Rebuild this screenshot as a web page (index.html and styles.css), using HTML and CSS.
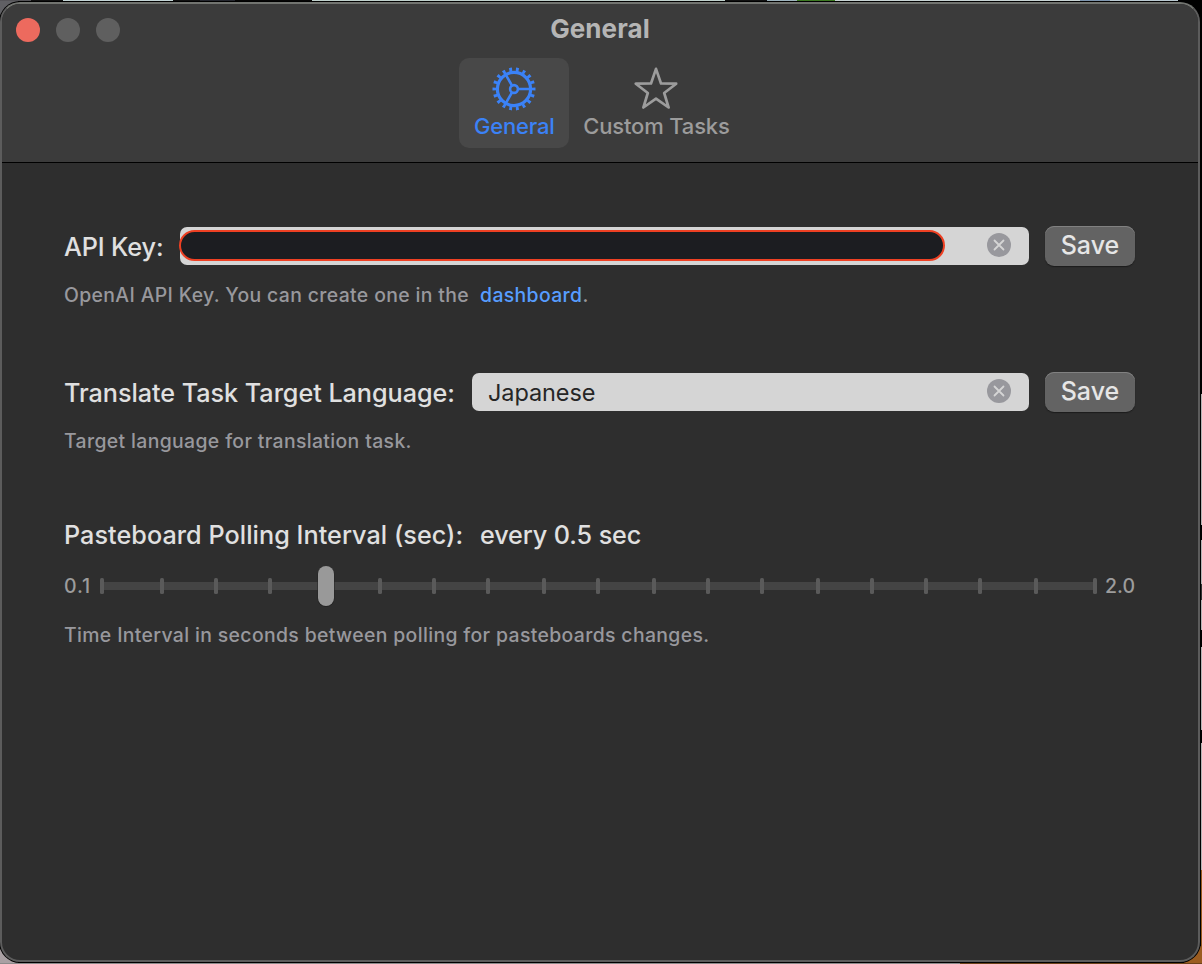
FILE: index.html
```
<!DOCTYPE html>
<html lang="en">
<head>
<meta charset="utf-8">
<title>General</title>
<link rel="stylesheet" href="styles.css">
</head>
<body>
<div class="desktop">
<main class="window">
  <header class="toolbar">
    <div class="titlebar">
      <div class="lights"><i class="light close"></i><i class="light"></i><i class="light"></i></div>
      <h1 class="title">General</h1>
      <div></div>
    </div>
    <nav class="tabs">
      <a class="tab active">
        <svg class="tab-icon" width="44" height="44" viewBox="-22 -22 44 44" fill="none" stroke="#3b82f7">
          <circle r="16.6" stroke-width="3.2"/>
          <circle r="19.5" stroke-width="4" pathLength="180" stroke-dasharray="4.2 5.8" stroke-dashoffset="2.1"/>
          <circle r="3.9" stroke-width="2.6"/>
          <path stroke-width="2.6" d="M4.5 0H16M-2.25-3.9L-8-13.9M-2.25 3.9L-8 13.9"/>
        </svg>
        <span class="tab-label">General</span>
      </a>
      <a class="tab">
        <svg class="tab-icon" width="44" height="44" viewBox="0 0 44 44" fill="none" stroke="#9c9c9c" stroke-width="2.7" stroke-linejoin="round">
          <path d="M22 1.9L27 16.5L42.2 16.7L30.2 26L34.6 40.5L22 31.7L9.4 40.5L13.8 26L1.8 16.7L17 16.5Z"/>
        </svg>
        <span class="tab-label">Custom Tasks</span>
      </a>
    </nav>
  </header>
  <section class="content">
    <div class="setting">
      <div class="row">
        <label class="label l-api">API Key:</label>
        <div class="field secret"><span class="redaction"></span>
          <svg class="clear" width="24" height="24" viewBox="0 0 24 24"><circle cx="12" cy="12" r="12" fill="#98989d"/><path d="M7.5 7.5l9 9m0-9l-9 9" stroke="#d5d5d5" stroke-width="1.8" stroke-linecap="round"/></svg>
        </div>
        <button class="save">Save</button>
      </div>
      <p class="hint"><span>OpenAI API Key. You can create one in the</span><span><a class="link">dashboard</a>.</span></p>
    </div>
    <div class="setting">
      <div class="row">
        <label class="label l-lang">Translate Task Target Language:</label>
        <div class="field"><span class="value">Japanese</span>
          <svg class="clear" width="24" height="24" viewBox="0 0 24 24"><circle cx="12" cy="12" r="12" fill="#98989d"/><path d="M7.5 7.5l9 9m0-9l-9 9" stroke="#d5d5d5" stroke-width="1.8" stroke-linecap="round"/></svg>
        </div>
        <button class="save">Save</button>
      </div>
      <p class="hint"><span>Target language for translation task.</span></p>
    </div>
    <div class="setting">
      <div class="poll"><span class="label l-poll">Pasteboard Polling Interval (sec):</span><span class="label l-every">every 0.5 sec</span></div>
      <div class="slider">
        <span class="bound low">0.1</span>
        <svg class="track" width="997" height="44" viewBox="100 564 997 44">
          <rect x="102" y="582" width="993" height="8" fill="#444"/>
          <g fill="#5a5a5a">
            <rect x="100" y="578" width="4" height="16" rx="1.5"/><rect x="160" y="578" width="4" height="16" rx="1.5"/><rect x="214" y="578" width="4" height="16" rx="1.5"/><rect x="268" y="578" width="4" height="16" rx="1.5"/><rect x="378" y="578" width="4" height="16" rx="1.5"/><rect x="432" y="578" width="4" height="16" rx="1.5"/><rect x="486" y="578" width="4" height="16" rx="1.5"/><rect x="542" y="578" width="4" height="16" rx="1.5"/><rect x="596" y="578" width="4" height="16" rx="1.5"/><rect x="652" y="578" width="4" height="16" rx="1.5"/><rect x="706" y="578" width="4" height="16" rx="1.5"/><rect x="760" y="578" width="4" height="16" rx="1.5"/><rect x="816" y="578" width="4" height="16" rx="1.5"/><rect x="870" y="578" width="4" height="16" rx="1.5"/><rect x="924" y="578" width="4" height="16" rx="1.5"/><rect x="978" y="578" width="4" height="16" rx="1.5"/><rect x="1034" y="578" width="4" height="16" rx="1.5"/><rect x="1093" y="578" width="4" height="16" rx="1.5"/>
          </g>
          <rect x="317.5" y="566.5" width="17" height="40.5" rx="8.5" fill="#222"/>
          <rect x="318" y="566" width="16" height="40" rx="8" fill="#999"/>
        </svg>
        <span class="bound high">2.0</span>
      </div>
      <p class="hint"><span>Time Interval in seconds between polling for pasteboards changes.</span></p>
    </div>
  </section>
</main>
</div>
</body>
</html>
```
FILE: styles.css
```
* { box-sizing: border-box; }
body { margin: 0; font-family: Inter, "Liberation Sans", sans-serif; }
.desktop {
  width: 1202px; height: 964px; padding: 2px 2px 2px 0; overflow: hidden;
  background:
    linear-gradient(90deg, #555458 0 31px, #111 31px 63px, #c3d4d5 63px 173px, #111 173px 200px, #24262e 200px 235px, #050505 235px 312px, #bfd0cb 312px 725px, #111 725px 767px, #9db3bd 767px 797px, #3d7a22 797px 835px, #c7d3d3 835px 1080px, #7e95ae 1080px 1110px, #b9c8d0 1110px 1178px, #000 1178px) 0 0 / 100% 1px no-repeat,
    linear-gradient(90deg, #8b8b8b 0 960px, #6c4219 960px) 0 963px / 100% 1px no-repeat,
    linear-gradient(#000 0 394px, #b5b5b5 394px 525px, #000 525px 540px, #b5b5b5 540px 584px, #333 584px 600px, #b5b5b5 600px 630px, #000 630px 647px, #b5b5b5 647px 730px, #000 730px 743px, #b5b5b5 743px 870px, #9b5c20 870px) 1201px 0 / 1px 100% no-repeat,
    radial-gradient(circle at 0 0, #606064 0 18px, transparent 18px),
    radial-gradient(circle at 0 962px, #a9a0a3 0 18px, transparent 18px),
    radial-gradient(circle at 1202px 964px, #9b5c20 0 18px, transparent 18px),
    #000;
}
.window {
  width: 1200px; height: 960px; overflow: hidden; display: flex; flex-direction: column;
  border: 2px solid #5c5c5c; border-top-color: #727470; border-radius: 20px;
  background: #2e2e2e; box-shadow: 0 0 0 1px #000;
}
.toolbar { height: 159px; background: #3b3b3b; border-bottom: 1px solid #000; }
.titlebar { height: 54px; display: grid; grid-template-columns: 1fr auto 1fr; padding: 0 14px; }
.lights { display: flex; gap: 16px; padding-top: 14px; }
.light { width: 24px; height: 24px; border-radius: 50%; background: #5f5f5f; }
.close { background: #ed6a5e; }
.title { margin: 8px 0 0; font-size: 26px; line-height: 34px; font-weight: 700; color: #b5b5b5; letter-spacing: .1px; white-space: nowrap; }
.tabs { display: flex; justify-content: center; gap: 4px; margin-right: 1px; }
.tab { height: 90px; padding: 9px 10px 0; display: flex; flex-direction: column; align-items: center; border-radius: 10px; color: #9c9c9c; }
.tab.active { width: 110px; background: #484848; color: #3b82f7; }
.tab-icon { display: block; flex: none; }
.tab-label { font-size: 22px; line-height: 28px; margin-top: 1px; white-space: nowrap; font-weight: 450; letter-spacing: -.17px; }
.content { padding: 61px 63px 0 62px; color: #e0e0e0; }
.setting { height: 146px; }
.row { display: flex; align-items: center; height: 44px; }
.label { font-size: 25.2px; line-height: 34px; padding-top: 2px; white-space: nowrap; font-weight: 450; letter-spacing: -.04px; }
.l-api { width: 100px; letter-spacing: -.12px; }
.l-lang { width: 392px; }
.l-poll { width: 399px; letter-spacing: .05px; }
.l-every { letter-spacing: -.1px; }
.field { flex: 1; height: 38px; margin: 0 16px; padding: 0 18px 2px 16px; background: #d5d5d5; border-radius: 7px; display: flex; align-items: center; justify-content: space-between; color: #262626; }
.field.secret { padding-left: 0; }
.redaction { width: 766px; height: 31px; border: 2px solid #ee4023; border-radius: 15.5px; background: #1c1d21; margin-left: -1px; }
.value { font-size: 23.5px; line-height: 32px; padding-top: 3px; letter-spacing: -.1px; }
.clear { display: block; flex: none; }
.save { width: 90px; height: 40px; padding: 0 0 3px; border: 0; border-radius: 9px; background: #636363; box-shadow: inset 0 1px #818181, 0 1px 1px #1c1c1c; color: #e6e6e6; font: 450 25px/34px Inter, sans-serif; }
.hint { margin: 14px 0 0; display: flex; gap: 11px; font-size: 19.4px; line-height: 26px; color: #98989d; white-space: nowrap; font-weight: 450; letter-spacing: .36px; }
.link { color: #579dff; }
.poll { display: flex; gap: 17px; }
.slider { height: 44px; display: flex; align-items: center; margin-top: 12px; color: #9c9c9c; font-size: 19.5px; font-weight: 500; }
.bound { white-space: nowrap; }
.low { width: 36px; letter-spacing: .9px; }
.high { width: 38px; text-align: right; }
.track { display: block; flex: none; }
```
